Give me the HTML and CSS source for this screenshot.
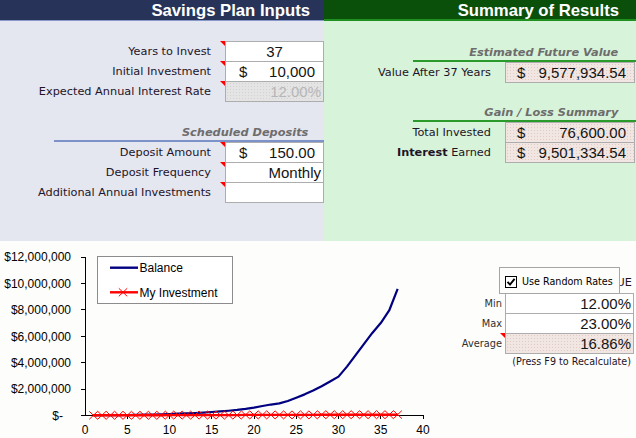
FILE: index.html
```html
<!DOCTYPE html>
<html>
<head>
<meta charset="utf-8">
<title>Savings Plan</title>
<link rel="stylesheet" href="styles.css">
</head>
<body>
<div class="top">
  <section class="panel inputs">
    <h1 class="hdr">Savings Plan Inputs</h1>
    <div class="rows first-rows">
      <div class="row"><span class="lbl">Years to Invest</span><div class="cell note center"><span>37</span></div></div>
      <div class="row"><span class="lbl">Initial Investment</span><div class="cell note money"><span class="cur">$</span><span>10,000</span></div></div>
      <div class="row"><span class="lbl">Expected Annual Interest Rate</span><div class="cell note disabled end"><span>12.00%</span></div></div>
    </div>
    <h2 class="sub">Scheduled Deposits</h2>
    <div class="rows">
      <div class="row"><span class="lbl">Deposit Amount</span><div class="cell note money"><span class="cur">$</span><span>150.00</span></div></div>
      <div class="row"><span class="lbl">Deposit Frequency</span><div class="cell note end"><span>Monthly</span></div></div>
      <div class="row"><span class="lbl">Additional Annual Investments</span><div class="cell note"></div></div>
    </div>
  </section>
  <section class="panel summary">
    <h1 class="hdr">Summary of Results</h1>
    <h2 class="sub sub-first">Estimated Future Value</h2>
    <div class="rows">
      <div class="row"><span class="lbl">Value After 37 Years</span><div class="cell result money"><span class="cur">$</span><span>9,577,934.54</span></div></div>
    </div>
    <h2 class="sub sub-second">Gain / Loss Summary</h2>
    <div class="rows">
      <div class="row"><span class="lbl">Total Invested</span><div class="cell result money"><span class="cur">$</span><span>76,600.00</span></div></div>
      <div class="row"><span class="lbl"><b>Interest</b> Earned</span><div class="cell result money"><span class="cur">$</span><span>9,501,334.54</span></div></div>
    </div>
  </section>
</div>
<div class="bottom">
  <svg class="chart" width="440" height="197" viewBox="0 241 440 197" xmlns="http://www.w3.org/2000/svg">
    <defs>
      <marker id="xm" markerWidth="10" markerHeight="10" refX="5" refY="5" markerUnits="userSpaceOnUse" viewBox="0 0 10 10" overflow="visible">
        <path d="M0.8,1 L9.2,9 M0.8,9 L9.2,1" stroke="#ff0000" stroke-width="1" fill="none"/>
      </marker>
    </defs>
    <g class="ylabels" text-anchor="end">
      <text x="71" y="261.3">$12,000,000</text>
      <text x="71" y="287.7">$10,000,000</text>
      <text x="71" y="314.1">$8,000,000</text>
      <text x="71" y="340.5">$6,000,000</text>
      <text x="71" y="367">$4,000,000</text>
      <text x="71" y="393.4">$2,000,000</text>
      <text x="63" y="419.8">$-</text>
    </g>
    <g class="xlabels" text-anchor="middle">
      <text x="85" y="434">0</text>
      <text x="127.25" y="434">5</text>
      <text x="169.5" y="434">10</text>
      <text x="211.75" y="434">15</text>
      <text x="254" y="434">20</text>
      <text x="296.25" y="434">25</text>
      <text x="338.5" y="434">30</text>
      <text x="380.75" y="434">35</text>
      <text x="423" y="434">40</text>
    </g>
    <path d="M85.5,257 V415.5 H423.5" stroke="#000" stroke-width="1" fill="none" shape-rendering="crispEdges"/>
    <path d="M81,257.5H85 M81,283.5H85 M81,309.5H85 M81,336.5H85 M81,362.5H85 M81,389.5H85 M81,415.5H85
             M127.5,415V419 M169.5,415V419 M211.5,415V419 M254.5,415V419 M296.5,415V419 M338.5,415V419 M380.5,415V419 M423.5,415V419"
          stroke="#000" stroke-width="1" fill="none" shape-rendering="crispEdges"/>
    <rect x="97.5" y="256.5" width="135" height="47" fill="#ffffff" stroke="#8c8c8c" stroke-width="1"/>
    <line x1="110" y1="267.7" x2="138" y2="267.7" stroke="#000080" stroke-width="2.4"/>
    <text class="leg" x="139.5" y="272">Balance</text>
    <polyline points="110,292.3 123,292.3 138,292.3" stroke="#ff0000" stroke-width="2.4" fill="none" marker-mid="url(#xm)"/>
    <text class="leg" x="139.5" y="296.6">My Investment</text>
    <polyline fill="none" stroke="#000080" stroke-width="2.2" stroke-linejoin="round"
      points="93.45,415.33 101.9,415.26 110.35,415.18 118.8,415.09 127.25,414.98 135.7,414.85 144.15,414.69 152.6,414.51 161.05,414.28 169.5,414.02 177.95,413.72 186.4,413.39 194.85,412.99 203.3,412.53 211.75,412 220.2,411.4 228.65,410.74 237.1,409.95 245.55,408.9 254,407.57 262.45,405.99 270.9,404.54 279.35,403.35 287.8,400.97 296.25,397.67 304.7,394.36 313.15,390.53 321.6,386.17 330.05,381.42 338.5,376.66 346.95,366.62 355.4,355.4 363.85,344.17 372.3,332.94 380.75,323.03 389.2,310.48 397.65,288.97"/>
    <polyline fill="none" stroke="#ff0000" stroke-width="2.4" marker-start="url(#xm)" marker-mid="url(#xm)" marker-end="url(#xm)"
      points="93.45,415.3 101.9,415.3 110.35,415.3 118.8,415.3 127.25,415.3 135.7,415.3 144.15,415.3 152.6,415.3 161.05,415.3 169.5,415.1 177.95,415.1 186.4,415.1 194.85,415.1 203.3,415.1 211.75,415.1 220.2,415.1 228.65,415.1 237.1,415.1 245.55,414.9 254,414.9 262.45,414.9 270.9,414.9 279.35,414.9 287.8,414.9 296.25,414.9 304.7,414.9 313.15,414.9 321.6,414.7 330.05,414.7 338.5,414.7 346.95,414.7 355.4,414.7 363.85,414.7 372.3,414.7 380.75,414.7 389.2,414.7 397.65,414.6"/>
  </svg>
  <div class="rates">
    <div class="rrow flag"><span class="rlbl"></span><div class="rcell plain"><span>TRUE</span></div></div>
    <div class="rrow"><span class="rlbl">Min</span><div class="rcell">12.00%</div></div>
    <div class="rrow"><span class="rlbl">Max</span><div class="rcell">23.00%</div></div>
    <div class="rrow"><span class="rlbl">Average</span><div class="rcell note result">16.86%</div></div>
    <p class="hint">(Press F9 to Recalculate)</p>
    <div class="toggle">
      <span class="box"><svg width="10" height="10" viewBox="0 0 10 10"><path d="M1.5,4.8 L4,7.6 L8.6,1.8" stroke="#000" stroke-width="1.9" fill="none"/></svg></span>
      <span class="toggle-text">Use Random Rates</span>
    </div>
  </div>
</div>
</body>
</html>
```

FILE: styles.css
```css
* { box-sizing: border-box; margin: 0; padding: 0; }
html, body { width: 636px; height: 438px; overflow: hidden; }
body {
  background: #fdfdfb;
  font-family: "DejaVu Sans", sans-serif;
  font-size: 11.3px;
  color: #1e1428;
}

.top { display: flex; height: 241px; }
.panel { display: flex; flex-direction: column; }
.inputs { width: 324px; flex: none; background: #e4e6f0; }
.summary { flex: 1; background: #d7f3d9; }

.hdr {
  height: 21px;
  font: bold 16.7px/22px "Liberation Sans", sans-serif;
  color: #ffffff;
  text-align: right;
  white-space: nowrap;
}
.inputs .hdr { background: #283359; border-bottom: 1px solid #8797c8; padding-right: 14px; }
.summary .hdr { background: #0a500a; border-bottom: 2px solid #1f8f1f; padding-right: 17px; }

.rows { display: flex; flex-direction: column; }
.first-rows { margin-top: 20px; }
.row { display: grid; height: 21px; align-items: center; column-gap: 14px; }
.row + .row { margin-top: -1px; }
.inputs .row { grid-template-columns: 211px 99px; }
.summary .row { grid-template-columns: 167px 130px; }
.lbl { text-align: right; white-space: nowrap; }
.lbl b { font-weight: bold; }

.cell {
  position: relative;
  height: 21px;
  border: 1px solid #adadad;
  background: #ffffff;
  display: flex;
  align-items: center;
  font: 15px "Liberation Sans", sans-serif;
  color: #141414;
  white-space: nowrap;
}
.cell.center { justify-content: center; }
.cell.end { justify-content: flex-end; padding-right: 2px; }
.cell.money { justify-content: space-between; padding: 0 8px 0 13px; }
.summary .cell.money { padding: 0 8px 0 11px; }

.note::before {
  content: "";
  position: absolute;
  left: -6px;
  top: -1px;
  border-top: 5px solid #ff0000;
  border-left: 5px solid transparent;
}

.disabled {
  background-color: #e4e4e4;
  background-image: radial-gradient(circle, #d2d2d2 0.7px, transparent 0.9px);
  background-size: 3px 3px;
  color: #b6b6b6;
}
.result {
  background-color: #f2e6e2;
  background-image: radial-gradient(circle, #dfcbc5 0.7px, transparent 0.9px);
  background-size: 3px 3px;
}

.sub {
  height: 18px;
  font: italic bold 11.35px/16px "DejaVu Sans", sans-serif;
  color: #6d6d6d;
  text-align: right;
  white-space: nowrap;
}
.inputs .sub { margin: 22px 0 0 54px; padding-right: 15.7px; border-bottom: 2px solid #7d92c8; }
.summary .sub { margin-left: 89px; padding-right: 17.7px; border-bottom: 2px solid #2a9a2a; }
.summary .sub-first { margin-top: 23px; }
.summary .sub-second { margin-top: 21px; }

.bottom { display: flex; height: 197px; }
.chart { display: block; flex: none; width: 440px; height: 197px; }
.chart text { font-family: "Liberation Sans", sans-serif; font-size: 12px; fill: #000; }

.rates { position: relative; flex: 1; padding-top: 32px; }
.rrow {
  display: grid;
  grid-template-columns: 63px 129px;
  column-gap: 2px;
  height: 21px;
  align-items: center;
}
.rrow + .rrow { margin-top: -1px; }
.rrow.flag { height: 20px; margin-bottom: 1px; }
.rlbl { text-align: right; font-size: 9.8px; color: #303030; padding-right: 1px; }
.rcell {
  position: relative;
  height: 21px;
  border: 1px solid #adadad;
  background: #ffffff;
  text-align: right;
  padding-right: 2px;
  font: 15px/19px "Liberation Sans", sans-serif;
  color: #141414;
}
.rcell.plain {
  justify-self: end;
  width: 14px;
  height: 20px;
  overflow: hidden;
  display: flex;
  justify-content: flex-end;
  border: none;
  background: none;
  font: 11.3px/20px "DejaVu Sans", sans-serif;
  color: #1e1428;
  white-space: nowrap;
}
.rcell.result {
  background-color: #f2e6e2;
  background-image: radial-gradient(circle, #dfcbc5 0.7px, transparent 0.9px);
  background-size: 3px 3px;
}
.hint {
  margin-top: 2px;
  text-align: right;
  padding-right: 5px;
  font-size: 9.6px;
  line-height: 12px;
  color: #1e1428;
  white-space: nowrap;
}

.toggle {
  position: absolute;
  left: 59px;
  top: 26px;
  width: 121px;
  height: 27px;
  border: 1px solid #a6a6a6;
  background: #fdfdfb;
  display: flex;
  align-items: center;
  gap: 5px;
  padding: 2px 0 0 5px;
  font-size: 9.6px;
  color: #000;
  white-space: nowrap;
}
.box {
  width: 12px;
  height: 12px;
  border: 1px solid #000;
  background: #fff;
  display: flex;
  align-items: center;
  justify-content: center;
}
.box svg { display: block; }
```
